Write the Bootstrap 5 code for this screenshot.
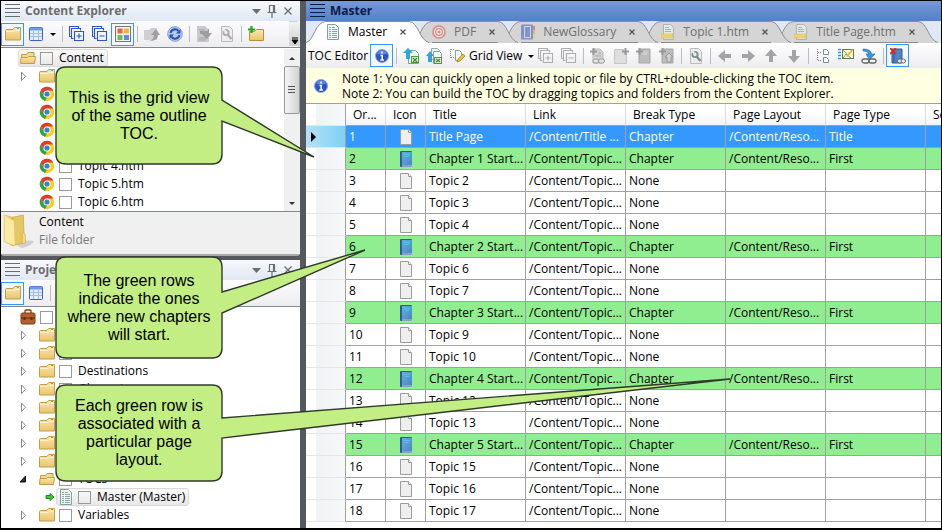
<!DOCTYPE html>
<html lang="en">
<head>
<meta charset="utf-8">
<meta name="viewport" content="width=device-width, initial-scale=1">
<title>TOC Editor</title>
<link href="https://cdn.jsdelivr.net/npm/bootstrap@5.3.0/dist/css/bootstrap.min.css" rel="stylesheet">
<style>
body{font-family:"Open Sans","Noto Sans",sans-serif;font-size:12px;line-height:18px;color:#000;background:#55585c}
.app-frame{height:100vh;border:1px solid #000;border-width:1px 1px 2px}
.side-col{flex:0 0 299px}
.main-col{margin-left:6px;background:#fff}
.pane-head{height:20px;background:linear-gradient(#f7f9fc,#dfe8f4);color:#6d6d6d;padding:0 4px}
.pane-head .head-title{font-weight:700}
.ico{width:16px;height:16px;display:block;flex:none}
.ico-page{width:14px;height:16px}
.tool-strip{height:27px;background:linear-gradient(#fcfcfd,#ededf0);border-bottom:1px solid #828790}
.t-btn{width:23px;height:23px;padding:0;border:1px solid transparent;background:none;display:flex;align-items:center;justify-content:center;flex:none}
.t-btn.is-on{border-color:#3399ff;background:#f3f8fd}
.t-blue{color:#2a55d4}
.t-gray{color:#adadad}
.t-slate{color:#7d8f8e}
.t-sep{width:6px;flex:none;display:flex;justify-content:center}
.t-sep::before{content:"";width:1px;height:16px;background:#bdbdbd}
.t-caret{width:12px}
.t-more{width:11px;background:linear-gradient(#f2f2f2,#cfcfd2);border-radius:0 4px 4px 0}
.tree-area{background:#fff;overflow:hidden;padding-top:1px}
.t-row{height:18px;display:flex;align-items:center;gap:4px;white-space:nowrap}
.t-row .lbl{padding:0 2px}
.lvl-0{padding-left:17px}
.lvl-root{padding-left:19px}
.lvl-1{padding-left:15px}
.lvl-2{padding-left:43px}
.t-row input,.t-row .twist{flex:none}
.t-row input{appearance:none;width:13px;height:13px;margin:0;border:1px solid #9a9a9a;background:#fff}
.twist{width:15px;height:12px}
.picked{display:flex;align-items:center;gap:4px;height:18px;border:1px solid #d9d9d9;border-radius:3px;background:linear-gradient(#fafafa,#e8e8e8);padding:0 1px}
.t-row .picked input{background:transparent}
.scroll-rail{width:16px;background:#f0f0f0}
.scroll-thumb{height:48px;margin-top:1px;border:1px solid #979797;border-radius:2px;background:linear-gradient(90deg,#f5f5f5,#d2d2d2);display:flex;align-items:center;justify-content:center}
.info-foot{background:#f0f0f0;border-top:1px solid #828790;height:43px}
.muted-text{color:#7a7a7a}
.pane-bottom{border-bottom:2px solid #aaa;border-radius:0 0 3px 3px;background:#f0f0f0}
.doc-head{height:20px;background:linear-gradient(#7799d9,#5380c7);color:#0c1c48;font-weight:700;padding:0 4px}
.tab-strip{height:22px;background:#dfe8f4}
.doc-tab{position:relative;height:22px;border:0;background:none;padding:0 18px 0 20px;margin-right:-17px;display:flex;align-items:center;gap:8px;color:#6f6f6f;font-size:12px;line-height:18px;flex:none;white-space:nowrap}
.doc-tab .edge{position:absolute;top:0;height:22px;width:20px;fill:#d5d5d5}
.doc-tab .edge-l{left:0}
.doc-tab .edge-r{right:0}
.doc-tab .span-mid{position:absolute;top:0;bottom:0;left:20px;right:20px;background:#d5d5d5;border-top:1px solid #8e8e8e;border-bottom:1px solid #8e8e8e}
.doc-tab .tab-in{position:relative}
.doc-tab.is-active{color:#000}
.doc-tab.is-active .span-mid{background:#fff;border-bottom-color:#fff}
.doc-tab.is-active .edge{fill:#fff}
.doc-tab .faded{opacity:.55}
.doc-tab .shut{color:#555}
.z5{z-index:5}.z4{z-index:4}.z3{z-index:3}.z2{z-index:2}.z1{z-index:1}
.doc-tools{height:25px;background:linear-gradient(#fff,#ececef)}
.doc-tools .t-label{padding:0 2px}
.note-bar{background:#ffffe1;height:36px;line-height:15px;border-bottom:1px solid #a0a0a0}
.note-bar .note-ico{margin:0 13px 0 7px}
.toc-grid{table-layout:fixed;width:100%;border-collapse:separate;border-spacing:0;margin:0}
.toc-grid th,.toc-grid td{height:22px;padding:0 0 0 3px;border-right:1px solid #a0a0a0;border-bottom:1px solid #a0a0a0;white-space:nowrap;overflow:hidden;font-weight:400;line-height:18px}
.toc-grid thead th{background:linear-gradient(#fff 45%,#f1f2f4);border-right-color:#dcdcdc;padding:0 0 0 7px}
.toc-grid tr th:first-child{background:linear-gradient(90deg,#fff 25%,#f1f2f4 27%,#f7f8fa);border-bottom-color:#e6e6e6;border-right-color:#a0a0a0;padding:0 5px}
.toc-grid th:last-child,.toc-grid td:last-child{border-right:0}
.toc-grid .chap td{background:#90ee90}
.toc-grid .cur td{background:#3399ff;color:#fff}
.toc-grid tbody .cur th:first-child{background:linear-gradient(90deg,#b5e2f7,#7fd0f5)}
.toc-grid .ico{margin:auto}
.toc-grid td:nth-child(3){padding:0}
.c-head{width:40px}.c-num{width:40px}.c-txt{width:100px}
.callout-box{position:absolute;left:55px;width:166px;z-index:20;display:flex;align-items:center;justify-content:center;text-align:center;font:16px/18px "Liberation Sans",Arial,sans-serif}
.callout-box svg{position:absolute;left:0;top:0;width:100%;height:100%;overflow:visible;pointer-events:none}
.callout-box path{fill:#c3ee84;stroke:#2f3a2a;stroke-width:1.4}
.callout-box p{position:relative;margin:0;white-space:nowrap}
.call-a{top:66px;height:97px}
.call-b{top:256px;height:101px}
.call-c{top:384px;height:96px}
</style>
<script src="https://cdn.jsdelivr.net/npm/bootstrap@5.3.0/dist/js/bootstrap.bundle.min.js" defer></script>
</head>
<body class="overflow-hidden">
<svg width="0" height="0" class="position-absolute" aria-hidden="true">
<defs>
<linearGradient id="gFold" x1="0" y1="0" x2="0" y2="1"><stop offset="0" stop-color="#fbe7b0"/><stop offset="1" stop-color="#e9c46c"/></linearGradient>
<linearGradient id="gBlue" x1="0" y1="0" x2="1" y2="1"><stop offset="0" stop-color="#6aaede"/><stop offset="1" stop-color="#4a86c4"/></linearGradient>
<linearGradient id="gBig" x1="0" y1="0" x2="1" y2="0"><stop offset="0" stop-color="#fff0a8"/><stop offset="1" stop-color="#dcb84e"/></linearGradient>
<symbol id="i-grip" viewBox="0 0 16 16"><path d="M0 1.500h15M0 5.500h15M0 9.500h15M0 13.500h15" stroke="currentColor" fill="none"/></symbol>
<symbol id="i-down" viewBox="0 0 16 16"><path d="M4 6h9L8.500 11z" fill="currentColor"/></symbol>
<symbol id="i-caret" viewBox="0 0 16 16"><path d="M5 7h6L8 10z" fill="#000"/></symbol>
<symbol id="i-pin" viewBox="0 0 16 16"><path d="M5.500 9V2.500h5V9M3.500 9.500h9M8 10v5M9.500 3v6" stroke="currentColor" stroke-width="1.200" fill="none"/></symbol>
<symbol id="i-x" viewBox="0 0 16 16"><path d="M4.500 4.500l7 7M11.500 4.500l-7 7" stroke="currentColor" stroke-width="1.300" fill="none"/></symbol>
<symbol id="i-shut" viewBox="0 0 16 16"><path d="M5.500 5.500l5 5M10.500 5.500l-5 5" stroke="currentColor" stroke-width="1.300" fill="none"/></symbol>
<symbol id="i-folder" viewBox="0 0 16 16"><path d="M.5 4.500Q.5 3.500 1.500 3.500H8l1.500-2h6v12.500H.5z" fill="url(#gFold)" stroke="#c69c48"/><path d="M1 5.500h8l1-1h5" stroke="#fff3cf" fill="none"/><path d="M12 2.500h2" stroke="#3bb7e8"/></symbol>
<symbol id="i-open" viewBox="0 0 16 16"><path d="M1.500 13V4.500h5l1.500-2h6V13z" fill="#f3d894" stroke="#c69c48"/><path d="M.5 13.500L1 7.500h6.500l1-1h7l-1 7z" fill="url(#gFold)" stroke="#c69c48"/><path d="M11 2.500h3" stroke="#4fc040"/></symbol>
<symbol id="i-addfold" viewBox="0 0 16 16"><path d="M1.500 5.500h5l2-2h7V14.500h-14z" fill="url(#gFold)" stroke="#b98f3c"/><path d="M3.500 0v7M0 3.500h7" stroke="#1fa51f" stroke-width="2.200"/></symbol>
<symbol id="i-grid" viewBox="0 0 16 16"><rect x="1.500" y="1.500" width="13" height="13" rx="1" fill="#e4eeff" stroke="#3a62c8"/><path d="M2 3h12" stroke="#6f98ea" stroke-width="3"/><path d="M2 7.500h12M2 10.500h12M5.500 5v9M10.500 5v9" stroke="#a0bcf0"/></symbol>
<symbol id="i-plus" viewBox="0 0 16 16"><path d="M2.500 10.500h-2V.5h9v2M4.500 12.500h-2v-10h9v2M5.500 5.500h9v9h-9zM10 7.500v5M7.500 10h5" fill="none" stroke="currentColor" stroke-width="1.100"/></symbol>
<symbol id="i-minus" viewBox="0 0 16 16"><path d="M2.500 10.500h-2V.5h9v2M4.500 12.500h-2v-10h9v2M5.500 5.500h9v9h-9zM7.500 10h5" fill="none" stroke="currentColor" stroke-width="1.100"/></symbol>
<symbol id="i-tiles" viewBox="0 0 16 16"><rect x=".5" y=".5" width="15" height="15" fill="#f4f4f0" stroke="#777"/><rect x="2.500" y="2.500" width="5" height="5" fill="#e8644c"/><rect x="9" y="2.500" width="5" height="5" fill="#f2b53a"/><rect x="2.500" y="9" width="5" height="5" fill="#6cbb56"/><rect x="9" y="9" width="5" height="5" fill="#5b8ee0"/></symbol>
<symbol id="i-upgray" viewBox="0 0 16 16"><path d="M0 4h5l2-2h6v12H0z" fill="#cfcfcf"/><path d="M5 15q5-1 5-6H7L12 3l4 6h-2q0 6-9 6z" fill="#a0a0a0"/></symbol>
<symbol id="i-sync" viewBox="0 0 16 16"><circle cx="8" cy="8" r="7.300" fill="#b8cdf3" stroke="#8f9dbb"/><path d="M3.500 7A4.600 4.600 0 0 1 11.500 5M12.500 9a4.600 4.600 0 0 1-8 2" fill="none" stroke="#2450c0" stroke-width="2"/><path d="M13.500 3v4.500H9zM2.500 13V8.500H7z" fill="#2450c0"/></symbol>
<symbol id="i-docarrow" viewBox="0 0 16 16"><path d="M1 0h8l4 4v12H1z" fill="#c9c9c9"/><path d="M3 4h6M3 12h7M3 14h7" stroke="#a5a5a5"/><path d="M4 5h8V3h1v4h3l-5 6-5-5H4z" fill="#9d9d9d"/></symbol>
<symbol id="i-wrench" viewBox="0 0 16 16"><path d="M2.500.5h8l3 3v12h-11z" fill="#ededed" stroke="#bbb"/><circle cx="7" cy="6.500" r="2.600" fill="none" stroke="currentColor" stroke-width="1.800"/><path d="M8.500 8.500l4 4.500" stroke="currentColor" stroke-width="2.400"/><path d="M4 3l3 3" stroke="#ededed" stroke-width="2"/></symbol>
<symbol id="i-chrome" viewBox="0 0 16 16"><circle cx="8" cy="8" r="7.200" fill="#f8cf1c"/><path d="M1.700 4.400A7.200 7.200 0 0 1 14.300 4.600H8L4.800 9.500z" fill="#dd3b2e"/><path d="M1.700 4.400L5 10l3 1.400-2 3.600A7.200 7.200 0 0 1 1.700 4.400z" fill="#2fa24c"/><circle cx="8" cy="8" r="3.500" fill="#fff"/><circle cx="8" cy="8" r="2.600" fill="#3b7fd4"/></symbol>
<symbol id="i-case" viewBox="0 0 16 16"><path d="M5 4V2q0-1 1-1h4q1 0 1 1v2" fill="none" stroke="#7c3c14" stroke-width="1.300"/><rect x="1" y="4" width="14" height="11" rx="1.500" fill="#b5602c" stroke="#7c3c14"/><path d="M1 9h14" stroke="#6e3210"/><path d="M3.500 8h2v3h-2zM10.500 8h2v3h-2z" fill="#5e2b0c"/></symbol>
<symbol id="i-doc" viewBox="0 0 14 16"><path d="M1.500.5h8l3 3v12h-11z" fill="#eef6f4" stroke="#84a09e"/><path d="M3 3.500h2m1 0h3M3 5.500h2m1 0h5M3 7.500h2m1 0h5M3 9.500h2m1 0h5M3 11.500h2m1 0h5M3 13.500h2m1 0h5" stroke="#8aa8a6"/></symbol>
<symbol id="i-topic" viewBox="0 0 14 16"><path d="M2.500.5h7l3 3v12h-10z" fill="#f3f8f7" stroke="#84a09e"/><path d="M4 3.500h4M4 5.500h6M4 7.500h6" stroke="#7d9997"/><rect x="0" y="10" width="12" height="4" fill="#ffd21e" stroke="#e0a800" stroke-width=".6"/></symbol>
<symbol id="i-target" viewBox="0 0 14 14"><circle cx="7" cy="7" r="6" fill="#fff" stroke="#e0463c" stroke-width="1.600"/><circle cx="7" cy="7" r="3.300" fill="none" stroke="#e0463c" stroke-width="1.300"/><circle cx="7" cy="7" r="1.300" fill="#e0463c"/></symbol>
<symbol id="i-gloss" viewBox="0 0 14 16"><path d="M11 2h3v4h-3z" fill="#e04a3a"/><path d="M11 6h3v4h-3z" fill="#f0a020"/><path d="M11 10h3v4h-3z" fill="#f4d020"/><rect x="0" y=".5" width="12" height="15" rx="1" fill="#3f62b8"/><path d="M3.500 2.500h6v11h-6z" fill="none" stroke="#c9d8f4"/></symbol>
<symbol id="i-info" viewBox="0 0 16 16"><circle cx="8" cy="8" r="6.500" fill="#2a55c8" stroke="#8ca6da"/><path d="M3 5.500a5.500 5.500 0 0 1 10 0q-5 2-10 0z" fill="#5f86e2"/><path d="M8 3.500v2M6.500 7.500h1.700v4M6.300 12h3.600" stroke="#fff" stroke-width="1.500" fill="none"/></symbol>
<symbol id="i-xls" viewBox="0 0 16 16"><path d="M5.500 2.500h7l3 3v10h-10z" fill="#f2faf8" stroke="#7ba39a"/><rect x="8.500" y="8.500" width="7" height="6" fill="#dff2d8" stroke="#4f9a3a"/><path d="M10 10l4 4M14 10l-4 4" stroke="#3d8a2a" stroke-width="1.200"/><path d="M3 11V5H0l5-5 5 5H7v6z" fill="#35a3dc"/></symbol>
<symbol id="i-xls2" viewBox="0 0 16 16"><path d="M5.500.5h6l2 2v9h-8z" fill="#eaf5f3" stroke="#8fb0aa"/><path d="M7.500 3.500h6l2 2v10h-8z" fill="#f2faf8" stroke="#7ba39a"/><rect x="8.500" y="9.500" width="7" height="6" fill="#dff2d8" stroke="#4f9a3a"/><path d="M10 11l4 3M14 11l-4 3" stroke="#3d8a2a" stroke-width="1.200"/><path d="M2 14V8H0l4-5 4 5H6v6z" fill="#35a3dc"/></symbol>
<symbol id="i-view" viewBox="0 0 16 16"><path d="M1.500 1v9M2 1.500h4M2 9.500h4" stroke="#888" stroke-dasharray="1 1" fill="none"/><path d="M6.500 2.500h4l2 2v3M6.500 2.500v10h3" fill="#f5faf9" stroke="#86a39f"/><path d="M8 14l1-3 5-5 2 2-5 5z" fill="#f2c235" stroke="#8a6a18" stroke-width=".6"/></symbol>
<symbol id="i-g1" viewBox="0 0 16 16"><path d="M3 1h7l3 3v11H3z" fill="#d4d4d4" stroke="#bbb"/><path d="M0 3.500h7M3.500 0v7" stroke="#999" stroke-width="2"/><path d="M8 5h3M5 8h6" stroke="#a8a8a8"/><rect x="3" y="11" width="6" height="4" rx="2" fill="#e4e4e4" stroke="#999"/><rect x="8.500" y="11" width="6" height="4" rx="2" fill="#e4e4e4" stroke="#999"/></symbol>
<symbol id="i-g2" viewBox="0 0 16 16"><path d="M1.500 1.500h9v3h3v11h-12z" fill="#dedede" stroke="#c4c4c4"/><path d="M9 3.500h7M12.500 0v7" stroke="#999" stroke-width="2"/></symbol>
<symbol id="i-g3" viewBox="0 0 16 16"><path d="M3 1h11v14H3z" fill="#bcbcbc" stroke="#a6a6a6"/><path d="M6 4h6M6 6h5" stroke="#ddd"/><path d="M0 3.500h7M3.500 0v7" stroke="#999" stroke-width="2"/></symbol>
<symbol id="i-g4" viewBox="0 0 16 16"><path d="M3 1h11v14H3z" fill="#bcbcbc" stroke="#a6a6a6"/><path d="M10 5l4 4h-2v5H8V9H6z" fill="#d0d0d0" stroke="#989898"/><path d="M0 3.500h7M3.500 0v7" stroke="#999" stroke-width="2"/></symbol>
<symbol id="i-left" viewBox="0 0 16 16"><path d="M1 8l7-6v4h6v4H8v4z" fill="#a4a4a4"/></symbol>
<symbol id="i-right" viewBox="0 0 16 16"><path d="M15 8L8 2v4H2v4h6v4z" fill="#a4a4a4"/></symbol>
<symbol id="i-up" viewBox="0 0 16 16"><path d="M8 1l6 7h-4v6H6V8H2z" fill="#a4a4a4"/></symbol>
<symbol id="i-dn" viewBox="0 0 16 16"><path d="M8 15l6-7h-4V2H6v6H2z" fill="#a4a4a4"/></symbol>
<symbol id="i-tree" viewBox="0 0 16 16"><path d="M2.500 1v12M3 4.500h4M3 12.500h4" stroke="#777" stroke-dasharray="1 1" fill="none"/><path d="M8.500 1.500h3l2 2v3h-5zM8.500 9.500h3l2 2v3h-5z" fill="#fff" stroke="#6e9490"/></symbol>
<symbol id="i-mail" viewBox="0 0 16 16"><path d="M0 1.500h3M0 4.500h3M0 7.500h3M0 10.500h3" stroke="#2d9bea" stroke-width="1.500"/><rect x="4.500" y="1.500" width="11" height="9" fill="#fffbe0" stroke="#5c7c4c"/><path d="M5 10l3-4 5 4M5 2l4 4" stroke="#8a9a7a" fill="none"/><path d="M8 8l6-7 1.500 1-6 7z" fill="#f0b52a"/></symbol>
<symbol id="i-link" viewBox="0 0 16 16"><path d="M2 1q8 0 8.500 5H14l-5.500 6L5 6h2.500Q7 3 2 3z" fill="#3a95e0" stroke="#1f6db5" stroke-width=".6"/><rect x="1" y="11" width="7" height="4" rx="2" fill="none" stroke="#666" stroke-width="1.300"/><rect x="8" y="11" width="7" height="4" rx="2" fill="none" stroke="#666" stroke-width="1.300"/></symbol>
<symbol id="i-unlink" viewBox="0 0 16 16"><path d="M2 1h10v14H2z" fill="#4c86c6" stroke="#2c5c98"/><path d="M4 1v14" stroke="#2c5c98"/><path d="M0 0l6 6M6 0L0 6" stroke="#e02818" stroke-width="1.800"/><rect x="7.500" y="11" width="4.500" height="4" rx="2" fill="#eee" stroke="#666"/><rect x="11" y="11" width="4.500" height="4" rx="2" fill="#eee" stroke="#666"/></symbol>
<symbol id="i-blank" viewBox="0 0 16 16"><path d="M2.500.5h8l3 3v12h-11z" fill="#efefef" stroke="#9c9c9c"/><path d="M10.500.5v3h3" fill="#fff" stroke="#9c9c9c"/></symbol>
<symbol id="i-book" viewBox="0 0 16 16"><rect x="2" y="0" width="12" height="16" rx="1" fill="#2f5d93"/><rect x="4" y="1" width="10" height="13" fill="url(#gBlue)"/><path d="M4 15h10" stroke="#e8e8e8"/><path d="M6 3.500h6M7 5.500h4" stroke="#52c4e8"/></symbol>
<symbol id="i-go" viewBox="0 0 12 12"><path d="M2 4.500h4V2.500l4 3.500-4 3.500v-2H2z" fill="#3ecb3e" stroke="#168a16"/></symbol>
<symbol id="i-closed" viewBox="0 0 15 12"><path d="M5.500 2v8.500l4-4.250z" fill="#fff" stroke="#8a8a8a"/></symbol>
<symbol id="i-opened" viewBox="0 0 15 12"><path d="M9.500 3v6H4z" fill="#333" stroke="#111"/></symbol>
<symbol id="i-bigfold" viewBox="0 0 30 34"><path d="M13 29q12-5 17-2-3 5-12 6z" fill="#cfcfcf"/><path d="M2 2l8 2v27L2 27z" fill="url(#gBig)" stroke="#d6bb62" stroke-width=".7"/><path d="M10 4l10-2 1 26-11 3z" fill="#e5c765" stroke="#c9a440" stroke-width=".7"/><path d="M3 4l8 3 1 24-9-4z" fill="#fbeaa0"/><path d="M19 19q4-2 3 9l-3 1z" fill="#f6dc7c" stroke="#caa94c" stroke-width=".6"/></symbol>
<symbol id="e-left" viewBox="0 0 20 22"><path d="M0 22C8 20 9 1 20 .5V22z"/><path d="M0 21.500C8 20 9 .5 20 .5" fill="none" stroke="#8e8e8e"/></symbol>
<symbol id="e-right" viewBox="0 0 20 22"><path d="M0 .5C9 .5 11 20 20 22H0z"/><path d="M0 .5C9 .5 11 20 20 21.500" fill="none" stroke="#8e8e8e"/></symbol>
</defs>
</svg>

<div class="app-frame d-flex position-relative overflow-hidden">
<aside class="side-col d-flex flex-column">
  <section class="pane-bottom">
    <header class="pane-head d-flex align-items-center">
      <svg class="ico me-1"><use href="#i-grip"/></svg><span class="head-title flex-grow-1">Content Explorer</span>
      <svg class="ico"><use href="#i-down"/></svg><svg class="ico"><use href="#i-pin"/></svg><svg class="ico"><use href="#i-x"/></svg>
    </header>
    <div class="tool-strip d-flex align-items-center">
      <button class="t-btn is-on" aria-label="Show folders"><svg class="ico"><use href="#i-folder"/></svg></button>
      <button class="t-btn" aria-label="Show files"><svg class="ico"><use href="#i-grid"/></svg></button>
      <button class="t-btn t-caret" aria-label="More views"><svg class="ico"><use href="#i-caret"/></svg></button>
      <span class="t-sep"></span>
      <button class="t-btn t-blue" aria-label="Expand all"><svg class="ico"><use href="#i-plus"/></svg></button>
      <button class="t-btn t-blue" aria-label="Collapse all"><svg class="ico"><use href="#i-minus"/></svg></button>
      <button class="t-btn is-on" aria-label="Tiles"><svg class="ico"><use href="#i-tiles"/></svg></button>
      <span class="t-sep"></span>
      <button class="t-btn" aria-label="Up"><svg class="ico"><use href="#i-upgray"/></svg></button>
      <button class="t-btn" aria-label="Refresh"><svg class="ico"><use href="#i-sync"/></svg></button>
      <span class="t-sep"></span>
      <button class="t-btn" aria-label="Open"><svg class="ico"><use href="#i-docarrow"/></svg></button>
      <button class="t-btn t-gray" aria-label="Properties"><svg class="ico"><use href="#i-wrench"/></svg></button>
      <span class="t-sep"></span>
      <button class="t-btn" aria-label="New folder"><svg class="ico"><use href="#i-addfold"/></svg></button>
      <button class="t-btn t-more ms-auto align-items-end h-100" aria-label="Toolbar options"><svg class="ico"><path d="M5 8h6M5 10h6l-3 4z" stroke="#000" fill="#000"/></svg></button>
    </div>
    <div class="d-flex tree-area">
      <div class="flex-grow-1">
        <div class="t-row lvl-0"><div class="picked"><svg class="ico"><use href="#i-open"/></svg><input type="checkbox" id="c0"><label class="lbl" for="c0">Content</label></div></div>
        <div class="t-row lvl-1"><svg class="twist"><use href="#i-closed"/></svg><span></span><svg class="ico"><use href="#i-folder"/></svg><input type="checkbox" aria-label="Folder"></div>
        <div class="t-row lvl-1"><span class="twist"></span><span></span><svg class="ico"><use href="#i-chrome"/></svg><input type="checkbox" aria-label="Topic"></div>
        <div class="t-row lvl-1"><span class="twist"></span><span></span><svg class="ico"><use href="#i-chrome"/></svg><input type="checkbox" aria-label="Topic"></div>
        <div class="t-row lvl-1"><span class="twist"></span><span></span><svg class="ico"><use href="#i-chrome"/></svg><input type="checkbox" aria-label="Topic"></div>
        <div class="t-row lvl-1"><span class="twist"></span><span></span><svg class="ico"><use href="#i-chrome"/></svg><input type="checkbox" aria-label="Topic"></div>
        <div class="t-row lvl-1"><span class="twist"></span><span></span><svg class="ico"><use href="#i-chrome"/></svg><input type="checkbox" id="c4"><label class="lbl" for="c4">Topic 4.htm</label></div>
        <div class="t-row lvl-1"><span class="twist"></span><span></span><svg class="ico"><use href="#i-chrome"/></svg><input type="checkbox" id="c5"><label class="lbl" for="c5">Topic 5.htm</label></div>
        <div class="t-row lvl-1"><span class="twist"></span><span></span><svg class="ico"><use href="#i-chrome"/></svg><input type="checkbox" id="c6"><label class="lbl" for="c6">Topic 6.htm</label></div>
      </div>
      <div class="scroll-rail d-flex flex-column">
        <svg class="ico"><path d="M5 11h6L8 8z" fill="#333"/></svg>
        <div class="scroll-thumb"><svg class="ico"><path d="M4 4.500h7M4 7.500h7M4 10.500h7" stroke="#555"/></svg></div>
        <svg class="ico mt-auto"><path d="M5 7h6l-3 3z" fill="#333"/></svg>
      </div>
    </div>
    <div class="info-foot d-flex align-items-center gap-1 pb-1">
      <svg width="34" height="36"><use href="#i-bigfold"/></svg>
      <div><div>Content</div><div class="muted-text">File folder</div></div>
    </div>
  </section>
  <section class="mt-1 flex-grow-1 d-flex flex-column overflow-hidden">
    <header class="pane-head d-flex align-items-center flex-shrink-0">
      <svg class="ico me-1"><use href="#i-grip"/></svg><span class="head-title flex-grow-1">Project Organizer</span>
      <svg class="ico"><use href="#i-down"/></svg><svg class="ico"><use href="#i-pin"/></svg><svg class="ico"><use href="#i-x"/></svg>
    </header>
    <div class="tool-strip d-flex align-items-center flex-shrink-0">
      <button class="t-btn is-on" aria-label="Show folders"><svg class="ico"><use href="#i-folder"/></svg></button>
      <button class="t-btn" aria-label="Show files"><svg class="ico"><use href="#i-grid"/></svg></button>
      <span class="t-sep"></span>
      <button class="t-btn t-blue" aria-label="Expand all"><svg class="ico"><use href="#i-plus"/></svg></button>
    </div>
    <div class="tree-area flex-grow-1">
      <div class="t-row lvl-root"><svg class="ico"><use href="#i-case"/></svg><input type="checkbox" aria-label="Project"></div>
      <div class="t-row lvl-1"><svg class="twist"><use href="#i-closed"/></svg><span></span><svg class="ico"><use href="#i-folder"/></svg><input type="checkbox" aria-label="Folder"></div>
      <div class="t-row lvl-1"><svg class="twist"><use href="#i-closed"/></svg><span></span><svg class="ico"><use href="#i-folder"/></svg><input type="checkbox" aria-label="Folder"></div>
      <div class="t-row lvl-1"><svg class="twist"><use href="#i-closed"/></svg><span></span><svg class="ico"><use href="#i-folder"/></svg><input type="checkbox" id="p1"><label class="lbl" for="p1">Destinations</label></div>
      <div class="t-row lvl-1"><svg class="twist"><use href="#i-closed"/></svg><span></span><svg class="ico"><use href="#i-folder"/></svg><input type="checkbox" id="p2"><label class="lbl" for="p2">Glossaries</label></div>
      <div class="t-row lvl-1"><svg class="twist"><use href="#i-closed"/></svg><span></span><svg class="ico"><use href="#i-folder"/></svg><input type="checkbox" aria-label="Folder"></div>
      <div class="t-row lvl-1"><svg class="twist"><use href="#i-closed"/></svg><span></span><svg class="ico"><use href="#i-folder"/></svg><input type="checkbox" aria-label="Folder"></div>
      <div class="t-row lvl-1"><svg class="twist"><use href="#i-closed"/></svg><span></span><svg class="ico"><use href="#i-folder"/></svg><input type="checkbox" aria-label="Folder"></div>
      <div class="t-row lvl-1"><svg class="twist"><use href="#i-closed"/></svg><span></span><svg class="ico"><use href="#i-folder"/></svg><input type="checkbox" aria-label="Folder"></div>
      <div class="t-row lvl-1"><svg class="twist"><use href="#i-opened"/></svg><span></span><svg class="ico"><use href="#i-open"/></svg><input type="checkbox" id="p3"><label class="lbl" for="p3">TOCs</label></div>
      <div class="t-row lvl-2 gap-0"><svg width="12" height="12"><use href="#i-go"/></svg><div class="picked"><svg class="ico"><use href="#i-doc"/></svg><input type="checkbox" id="p4"><label class="lbl" for="p4">Master (Master)</label></div></div>
      <div class="t-row lvl-1"><svg class="twist"><use href="#i-closed"/></svg><span></span><svg class="ico"><use href="#i-folder"/></svg><input type="checkbox" id="p5"><label class="lbl" for="p5">Variables</label></div>
    </div>
  </section>
</aside>

<main class="main-col flex-grow-1 overflow-hidden">
  <header class="doc-head d-flex align-items-center"><svg class="ico me-1"><use href="#i-grip"/></svg><span>Master</span></header>
  <div class="tab-strip d-flex overflow-hidden">
    <button class="doc-tab is-active z5"><svg class="edge edge-l"><use href="#e-left"/></svg><svg class="edge edge-r"><use href="#e-right"/></svg><span class="span-mid"></span><svg class="ico ico-page tab-in"><use href="#i-doc"/></svg><span class="tab-in">Master</span><svg class="ico tab-in shut"><use href="#i-shut"/></svg></button>
    <button class="doc-tab z4"><svg class="edge edge-l"><use href="#e-left"/></svg><svg class="edge edge-r"><use href="#e-right"/></svg><span class="span-mid"></span><svg class="ico ico-page tab-in faded"><use href="#i-target"/></svg><span class="tab-in">PDF</span><svg class="ico tab-in shut"><use href="#i-shut"/></svg></button>
    <button class="doc-tab z3"><svg class="edge edge-l"><use href="#e-left"/></svg><svg class="edge edge-r"><use href="#e-right"/></svg><span class="span-mid"></span><svg class="ico ico-page tab-in faded"><use href="#i-gloss"/></svg><span class="tab-in">NewGlossary</span><svg class="ico tab-in shut"><use href="#i-shut"/></svg></button>
    <button class="doc-tab z2"><svg class="edge edge-l"><use href="#e-left"/></svg><svg class="edge edge-r"><use href="#e-right"/></svg><span class="span-mid"></span><svg class="ico ico-page tab-in faded"><use href="#i-topic"/></svg><span class="tab-in">Topic 1.htm</span><svg class="ico tab-in shut"><use href="#i-shut"/></svg></button>
    <button class="doc-tab z1"><svg class="edge edge-l"><use href="#e-left"/></svg><svg class="edge edge-r"><use href="#e-right"/></svg><span class="span-mid"></span><svg class="ico ico-page tab-in faded"><use href="#i-topic"/></svg><span class="tab-in">Title Page.htm</span><svg class="ico tab-in shut"><use href="#i-shut"/></svg></button>
  </div>
  <div class="doc-tools d-flex align-items-center overflow-hidden">
    <span class="t-label text-nowrap">TOC Editor</span>
    <button class="t-btn is-on" aria-label="Notes"><svg class="ico"><use href="#i-info"/></svg></button>
    <span class="t-sep"></span>
    <button class="t-btn" aria-label="Export"><svg class="ico"><use href="#i-xls"/></svg></button>
    <button class="t-btn" aria-label="Export all"><svg class="ico"><use href="#i-xls2"/></svg></button>
    <button class="border-0 bg-transparent p-0 d-flex align-items-center gap-1 text-nowrap ms-1"><svg class="ico"><use href="#i-view"/></svg><span>Grid View</span><svg width="8" height="8"><path d="M2 3h6L5 6z"/></svg></button>
    <button class="t-btn t-gray" aria-label="Expand all"><svg class="ico"><use href="#i-plus"/></svg></button>
    <button class="t-btn t-gray" aria-label="Collapse all"><svg class="ico"><use href="#i-minus"/></svg></button>
    <span class="t-sep"></span>
    <button class="t-btn" aria-label="New linked item"><svg class="ico"><use href="#i-g1"/></svg></button>
    <button class="t-btn" aria-label="New item"><svg class="ico"><use href="#i-g2"/></svg></button>
    <button class="t-btn" aria-label="New book"><svg class="ico"><use href="#i-g3"/></svg></button>
    <button class="t-btn" aria-label="New top book"><svg class="ico"><use href="#i-g4"/></svg></button>
    <span class="t-sep"></span>
    <button class="t-btn t-slate" aria-label="Properties"><svg class="ico"><use href="#i-wrench"/></svg></button>
    <span class="t-sep"></span>
    <button class="t-btn" aria-label="Move left"><svg class="ico"><use href="#i-left"/></svg></button>
    <button class="t-btn" aria-label="Move right"><svg class="ico"><use href="#i-right"/></svg></button>
    <button class="t-btn" aria-label="Move up"><svg class="ico"><use href="#i-up"/></svg></button>
    <button class="t-btn" aria-label="Move down"><svg class="ico"><use href="#i-dn"/></svg></button>
    <span class="t-sep"></span>
    <button class="t-btn" aria-label="Auto tree"><svg class="ico"><use href="#i-tree"/></svg></button>
    <button class="t-btn" aria-label="Edit item"><svg class="ico"><use href="#i-mail"/></svg></button>
    <button class="t-btn" aria-label="Link"><svg class="ico"><use href="#i-link"/></svg></button>
    <span class="t-sep"></span>
    <button class="t-btn is-on" aria-label="Broken links"><svg class="ico"><use href="#i-unlink"/></svg></button>
  </div>
  <div class="note-bar d-flex align-items-center text-nowrap overflow-hidden">
    <svg class="ico note-ico"><use href="#i-info"/></svg>
    <div>Note 1: You can quickly open a linked topic or file by CTRL+double-clicking the TOC item.<br>Note 2: You can build the TOC by dragging topics and folders from the Content Explorer.</div>
  </div>
  <table class="toc-grid">
    <colgroup><col class="c-head"><col class="c-num"><col class="c-num"><col class="c-txt"><col class="c-txt"><col class="c-txt"><col class="c-txt"><col class="c-txt"><col></colgroup>
    <thead><tr><th></th><th>Or...</th><th>Icon</th><th>Title</th><th>Link</th><th>Break Type</th><th>Page Layout</th><th>Page Type</th><th>Section</th></tr></thead>
    <tbody>
    <tr class="cur"><th><svg width="6" height="10" class="d-block"><path d="M0 0v10l5-5z"/></svg></th><td>1</td><td><svg class="ico"><use href="#i-blank"/></svg></td><td>Title Page</td><td>/Content/Title ...</td><td>Chapter</td><td>/Content/Reso...</td><td>Title</td><td></td></tr>
    <tr class="chap"><th></th><td>2</td><td><svg class="ico"><use href="#i-book"/></svg></td><td>Chapter 1 Start...</td><td>/Content/Topic...</td><td>Chapter</td><td>/Content/Reso...</td><td>First</td><td></td></tr>
    <tr><th></th><td>3</td><td><svg class="ico"><use href="#i-blank"/></svg></td><td>Topic 2</td><td>/Content/Topic...</td><td>None</td><td></td><td></td><td></td></tr>
    <tr><th></th><td>4</td><td><svg class="ico"><use href="#i-blank"/></svg></td><td>Topic 3</td><td>/Content/Topic...</td><td>None</td><td></td><td></td><td></td></tr>
    <tr><th></th><td>5</td><td><svg class="ico"><use href="#i-blank"/></svg></td><td>Topic 4</td><td>/Content/Topic...</td><td>None</td><td></td><td></td><td></td></tr>
    <tr class="chap"><th></th><td>6</td><td><svg class="ico"><use href="#i-book"/></svg></td><td>Chapter 2 Start...</td><td>/Content/Topic...</td><td>Chapter</td><td>/Content/Reso...</td><td>First</td><td></td></tr>
    <tr><th></th><td>7</td><td><svg class="ico"><use href="#i-blank"/></svg></td><td>Topic 6</td><td>/Content/Topic...</td><td>None</td><td></td><td></td><td></td></tr>
    <tr><th></th><td>8</td><td><svg class="ico"><use href="#i-blank"/></svg></td><td>Topic 7</td><td>/Content/Topic...</td><td>None</td><td></td><td></td><td></td></tr>
    <tr class="chap"><th></th><td>9</td><td><svg class="ico"><use href="#i-book"/></svg></td><td>Chapter 3 Start...</td><td>/Content/Topic...</td><td>Chapter</td><td>/Content/Reso...</td><td>First</td><td></td></tr>
    <tr><th></th><td>10</td><td><svg class="ico"><use href="#i-blank"/></svg></td><td>Topic 9</td><td>/Content/Topic...</td><td>None</td><td></td><td></td><td></td></tr>
    <tr><th></th><td>11</td><td><svg class="ico"><use href="#i-blank"/></svg></td><td>Topic 10</td><td>/Content/Topic...</td><td>None</td><td></td><td></td><td></td></tr>
    <tr class="chap"><th></th><td>12</td><td><svg class="ico"><use href="#i-book"/></svg></td><td>Chapter 4 Start...</td><td>/Content/Topic...</td><td>Chapter</td><td>/Content/Reso...</td><td>First</td><td></td></tr>
    <tr><th></th><td>13</td><td><svg class="ico"><use href="#i-blank"/></svg></td><td>Topic 12</td><td>/Content/Topic...</td><td>None</td><td></td><td></td><td></td></tr>
    <tr><th></th><td>14</td><td><svg class="ico"><use href="#i-blank"/></svg></td><td>Topic 13</td><td>/Content/Topic...</td><td>None</td><td></td><td></td><td></td></tr>
    <tr class="chap"><th></th><td>15</td><td><svg class="ico"><use href="#i-book"/></svg></td><td>Chapter 5 Start...</td><td>/Content/Topic...</td><td>Chapter</td><td>/Content/Reso...</td><td>First</td><td></td></tr>
    <tr><th></th><td>16</td><td><svg class="ico"><use href="#i-blank"/></svg></td><td>Topic 15</td><td>/Content/Topic...</td><td>None</td><td></td><td></td><td></td></tr>
    <tr><th></th><td>17</td><td><svg class="ico"><use href="#i-blank"/></svg></td><td>Topic 16</td><td>/Content/Topic...</td><td>None</td><td></td><td></td><td></td></tr>
    <tr><th></th><td>18</td><td><svg class="ico"><use href="#i-blank"/></svg></td><td>Topic 17</td><td>/Content/Topic...</td><td>None</td><td></td><td></td><td></td></tr>
    </tbody>
  </table>
</main>

<div class="callout-box call-a"><svg><path d="M10 0H156Q166 0 166 10V33L258 90L166 54V87Q166 97 156 97H10Q0 97 0 87V10Q0 0 10 0z"/></svg><p>This is the grid view<br>of the same outline<br>TOC.</p></div>
<div class="callout-box call-b"><svg><path d="M10 0H156Q166 0 166 10V35L309 -7L166 56V91Q166 101 156 101H10Q0 101 0 91V10Q0 0 10 0z"/></svg><p>The green rows<br>indicate the ones<br>where new chapters<br>will start.</p></div>
<div class="callout-box call-c"><svg><path d="M10 0H156Q166 0 166 10V33L674 -6L166 53V86Q166 96 156 96H10Q0 96 0 86V10Q0 0 10 0z"/></svg><p>Each green row is<br>associated with a<br>particular page<br>layout.</p></div>
</div>
</body>
</html>
